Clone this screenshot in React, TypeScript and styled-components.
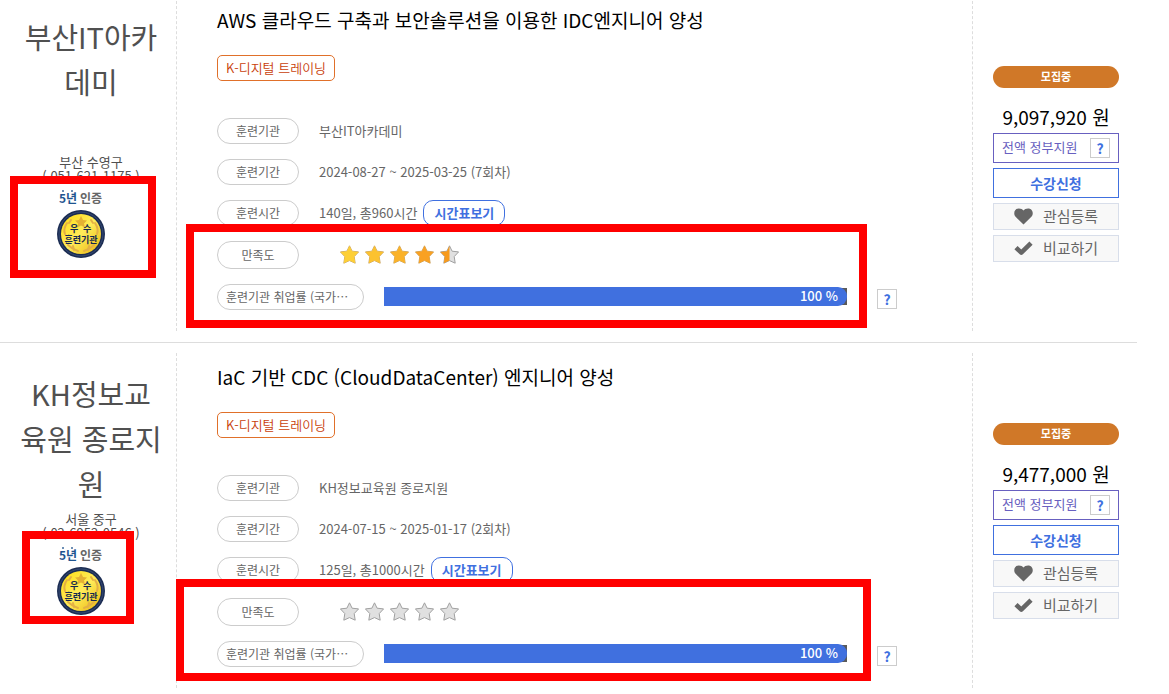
import React from "react";
import styled, { createGlobalStyle } from "styled-components";

const GlobalStyle = createGlobalStyle`
  * { box-sizing: border-box; }
  body {
    margin: 0;
    background: #fff;
    color: #666;
    font-family: "Noto Sans CJK KR", "Noto Sans", sans-serif;
    font-size: 13px;
  }
  button { font-family: inherit; cursor: pointer; }
`;

const List = styled.main`
  margin: -14px 32px 0 0;
`;

const Card = styled.article`
  position: relative;
  display: flex;
  padding: 10px 0 11px;
  border-bottom: 1px solid #ddd;
  &:last-child {
    padding-bottom: 0;
    border-bottom: 0;
  }
`;

const Academy = styled.div`
  flex: 0 0 177px;
  min-height: 335px;
  padding: 18px 14px 0 20px;
  border-right: 1px dashed #ddd;
  text-align: center;
`;

const AcademyName = styled.h2`
  min-height: 135px;
  margin: 0 0 6px;
  color: #505050;
  font-size: 29px;
  font-weight: 400;
  line-height: 45px;
  word-break: break-all;
`;

const Contact = styled.p`
  margin: 0;
  color: #505050;
  font-size: 13px;
  line-height: 14px;
`;

const BadgeArt = styled.svg`
  display: block;
  margin: 6px auto 0 36px;
`;

const Details = styled.div`
  flex: 1;
  min-width: 0;
  padding: 9px 75px 0 40px;
  border-right: 1px dashed #ddd;
`;

const Title = styled.h3`
  margin: 0 0 20px;
  font-size: 19px;
  font-weight: 400;
  line-height: 30px;
  a { color: #000; text-decoration: none; }
`;

const Tag = styled.span`
  display: flex;
  align-items: center;
  justify-content: center;
  width: 118px;
  height: 26px;
  padding-bottom: 2px;
  border: 1px solid #e0702a;
  border-radius: 5px;
  color: #c8400a;
  font-size: 13px;
  font-weight: 350;
`;

const Facts = styled.dl`
  display: flex;
  flex-direction: column;
  gap: 15px;
  margin: 37px 0 0;
`;

const Fact = styled.div`
  display: flex;
  align-items: center;
  gap: 20px;
`;

const Label = styled.dt<{ $wide?: boolean; $tall?: boolean }>`
  display: flex;
  flex: none;
  align-items: center;
  justify-content: ${(p) => (p.$wide ? "flex-start" : "center")};
  width: ${(p) => (p.$wide ? 147 : 82)}px;
  height: ${(p) => (p.$tall ? 28 : 26)}px;
  padding: 0 8px 2px;
  border: 1px solid #ccc;
  border-radius: 14px;
  font-size: 12px;
  white-space: nowrap;
`;

const Value = styled.dd`
  display: flex;
  flex: 1;
  align-items: center;
  gap: 6px;
  height: 26px;
  margin: 0;
  font-size: 13px;
  line-height: 22px;
`;

const ScheduleButton = styled.button`
  width: 82px;
  height: 26px;
  padding: 0 0 2px;
  border: 1px solid #4070e0;
  border-radius: 10px;
  background: #fff;
  color: #4070e0;
  font-size: 13px;
  font-weight: 700;
`;

const Stars = styled.span`
  display: flex;
  gap: 6px;
  padding: 0 0 2px 21px;
`;

const Track = styled.div`
  flex: 1;
  height: 17px;
  background: #5a5a5a;
`;

const Fill = styled.div`
  height: 19px;
  margin-top: -1px;
  padding-right: 9px;
  border-radius: 0 9px 9px 0;
  background: #4070df;
  color: #fff;
  font-size: 13px;
  font-weight: 500;
  line-height: 18px;
  text-align: right;
`;

const HelpButton = styled.button`
  flex: none;
  width: 20px;
  height: 20px;
  padding: 0;
  border: 1px solid #ccc;
  background: #fff;
  color: #4070df;
  font-size: 14px;
  font-weight: 700;
  line-height: 18px;
`;

const RateValue = styled(Value)`
  gap: 30px;
  padding-bottom: 1px;
  ${HelpButton} { margin-top: 5px; }
`;

const Side = styled.aside`
  display: flex;
  flex: 0 0 164px;
  flex-direction: column;
  gap: 5px;
  padding: 70px 18px 0 20px;
`;

const Status = styled.span`
  height: 22px;
  margin-bottom: 10px;
  border-radius: 11px;
  background: #d07828;
  color: #fff;
  font-size: 11px;
  font-weight: 700;
  line-height: 21px;
  text-align: center;
`;

const Price = styled.strong`
  height: 25px;
  color: #000;
  font-size: 19px;
  font-weight: 400;
  line-height: 28px;
  text-align: center;
  white-space: nowrap;
`;

const Support = styled.div`
  display: flex;
  align-items: center;
  justify-content: space-between;
  height: 30px;
  padding: 0 8px;
  border: 1px solid #6860c0;
  color: #6860c0;
  font-size: 13px;
`;

const SupportText = styled.span`
  padding-bottom: 3px;
`;

const ApplyButton = styled.button`
  height: 30px;
  padding: 0;
  border: 1px solid #4070df;
  background: #fff;
  color: #4070df;
  font-size: 14px;
  font-weight: 700;
`;

const ActionButton = styled.button`
  display: flex;
  align-items: center;
  justify-content: center;
  gap: 10px;
  height: 27px;
  padding: 0 0 1px;
  border: 1px solid #d8deea;
  background: #f8f8f8;
  color: #666;
  font-size: 15px;
  line-height: 24px;
`;

type Box = { left: number; top: number; height: number; width?: number; right?: number };

const Highlight = styled.div<{ $box: Box }>`
  position: absolute;
  left: ${(p) => p.$box.left}px;
  top: ${(p) => p.$box.top}px;
  height: ${(p) => p.$box.height}px;
  ${(p) => (p.$box.width ? `width: ${p.$box.width}px;` : `right: ${p.$box.right}px;`)}
  border: 8px solid #f00;
  pointer-events: none;
`;

const STAR = "M9.5 .8 12.1 6.2 18.6 6.9 14.2 11.6 15.2 18.2 9.5 15.6 3.8 18.2 4.8 11.6 .4 6.9 6.9 6.2Z";
const LEFT_HALF = "M9.5 .8V15.6L3.8 18.2 4.8 11.6 .4 6.9 6.9 6.2Z";
const STAR_COLORS = ["#fdcf36", "#fcc22f", "#fab229", "#f9a122", "#f79a1c"];

function Rating({ value }: { value: number }) {
  return (
    <Stars role="img" aria-label={`${value} / 5`}>
      {STAR_COLORS.map((color, i) => {
        const part = Math.max(0, Math.min(1, value - i));
        return (
          <svg key={color} width="19" height="19" viewBox="0 0 19 19">
            <path d={STAR} fill="#e0e0e0" stroke={part === 1 ? "#c9a56a" : "#a0a0a0"} strokeWidth="1" />
            {part === 1 && <path d={STAR} fill={color} />}
            {part > 0 && part < 1 && <path d={LEFT_HALF} fill={color} />}
          </svg>
        );
      })}
    </Stars>
  );
}

function Badge({ id }: { id: string }) {
  return (
    <BadgeArt width="50" height="70" viewBox="0 0 50 70">
      <defs>
        <linearGradient id={id} x1="0" y1="0" x2="1" y2="1">
          <stop offset="0" stopColor="#ffdc10" />
          <stop offset=".5" stopColor="#ffec5a" />
          <stop offset="1" stopColor="#e9b40c" />
        </linearGradient>
      </defs>
      <circle cx="7" cy="2" r="1" fill="#3d6a9c" />
      <circle cx="16" cy="2" r="1" fill="#3d6a9c" />
      <text x="3" y="14" fontSize="12" fontWeight="700" fill="#1f5590">5년</text>
      <text x="24" y="14" fontSize="12" fontWeight="700" fill="#666">인증</text>
      <circle cx="25" cy="45" r="24" fill="#1b2c52" />
      <circle cx="25" cy="45" r="22" fill="none" stroke="#354a74" strokeWidth="1" />
      <circle cx="25" cy="45" r="20" fill={`url(#${id})`} />
      <path d="M25 27l2 4 4 .5-3 3 1 4-4-2-4 2 1-4-3-3 4-.5Z" fill="#e5b133" />
      <g fill="none" stroke="#e3b045" strokeWidth="2" strokeLinecap="round">
        <path d="M11 34q-4 6-2 11M39 34q4 6 2 11" />
        <path d="M12 56q4 4 10 6M38 56q-4 4-10 6" />
        <path d="M15 31l-2 3M35 31l2 3M17 57l1 4M33 57l-1 4" />
      </g>
      <text x="14 27" y="43" fontSize="9" fontWeight="700" fill="#14284f">우수</text>
      <text x="25" y="54" fontSize="9" fontWeight="700" fill="#14284f" textAnchor="middle">훈련기관</text>
    </BadgeArt>
  );
}

const Heart = () => (
  <svg width="19" height="17" viewBox="0 0 19 17" fill="#666">
    <path d="M9.5 16.5 1.6 8.8C-1 6 .2 .5 4.900 .5 7 .5 8.600 1.400 9.500 2.600 10.400 1.400 12 .5 14.100 .5 18.800 .5 20 6 17.400 8.800Z" />
  </svg>
);

const Check = () => (
  <svg width="19" height="15" viewBox="0 0 19 15" fill="none" stroke="#666" strokeWidth="4.600" strokeLinejoin="round">
    <path d="M2 6.600 7.300 11.600 17 2.200" />
  </svg>
);

const courses = [
  {
    id: "busan",
    academy: "부산IT아카데미",
    region: "부산 수영구",
    phone: "( 051-621-1175 )",
    title: "AWS 클라우드 구축과 보안솔루션을 이용한 IDC엔지니어 양성",
    period: "2024-08-27 ~ 2025-03-25 (7회차)",
    time: "140일, 총960시간",
    rating: 4.5,
    rate: 100,
    price: "9,097,920 원",
    boxes: [
      { left: 10, top: 190, width: 146, height: 102 },
      { left: 186, top: 238, right: 270, height: 104 },
    ] as Box[],
  },
  {
    id: "kh",
    academy: "KH정보교육원 종로지원",
    region: "서울 중구",
    phone: "( 02-6952-0546 )",
    title: "IaC 기반 CDC (CloudDataCenter) 엔지니어 양성",
    period: "2024-07-15 ~ 2025-01-17 (2회차)",
    time: "125일, 총1000시간",
    rating: 0,
    rate: 100,
    price: "9,477,000 원",
    boxes: [
      { left: 22, top: 188, width: 112, height: 93 },
      { left: 176, top: 236, right: 266, height: 102 },
    ] as Box[],
  },
];

export default function App() {
  return (
    <>
      <GlobalStyle />
      <List lang="ko">
        {courses.map((c) => (
          <Card key={c.id}>
            <Academy>
              <AcademyName>{c.academy}</AcademyName>
              <Contact>{c.region}</Contact>
              <Contact>{c.phone}</Contact>
              <Badge id={`gold-${c.id}`} />
            </Academy>
            <Details>
              <Title><a href="#course">{c.title}</a></Title>
              <Tag>K-디지털 트레이닝</Tag>
              <Facts>
                <Fact><Label>훈련기관</Label><Value>{c.academy}</Value></Fact>
                <Fact><Label>훈련기간</Label><Value>{c.period}</Value></Fact>
                <Fact>
                  <Label>훈련시간</Label>
                  <Value>
                    {c.time}
                    <ScheduleButton type="button">시간표보기</ScheduleButton>
                  </Value>
                </Fact>
                <Fact><Label $tall>만족도</Label><Value><Rating value={c.rating} /></Value></Fact>
                <Fact>
                  <Label $wide>훈련기관 취업률 (국가…</Label>
                  <RateValue>
                    <Track><Fill style={{ width: `${c.rate}%` }}>{c.rate} %</Fill></Track>
                    <HelpButton type="button">?</HelpButton>
                  </RateValue>
                </Fact>
              </Facts>
            </Details>
            <Side>
              <Status>모집중</Status>
              <Price>{c.price}</Price>
              <Support>
                <SupportText>전액 정부지원</SupportText>
                <HelpButton type="button">?</HelpButton>
              </Support>
              <ApplyButton type="button">수강신청</ApplyButton>
              <ActionButton type="button"><Heart />관심등록</ActionButton>
              <ActionButton type="button"><Check />비교하기</ActionButton>
            </Side>
            {c.boxes.map((box) => <Highlight key={box.left} $box={box} />)}
          </Card>
        ))}
      </List>
    </>
  );
}
